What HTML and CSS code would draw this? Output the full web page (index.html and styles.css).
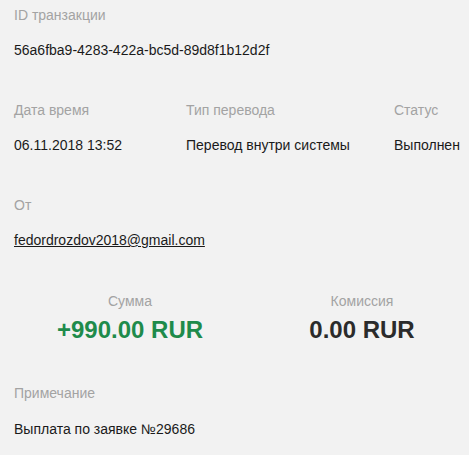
FILE: index.html
```html
<!doctype html>
<html lang="ru">

<head>
  <meta charset="utf-8">
  <title>Транзакция</title>
  <link rel="stylesheet" href="styles.css">
</head>

<body>
  <div class="details">
    <div class="field">
      <div class="label">ID транзакции</div>
      <div class="value">56a6fba9-4283-422a-bc5d-89d8f1b12d2f</div>
    </div>

    <div class="field row">
      <div class="col">
        <div class="label">Дата время</div>
        <div class="value">06.11.2018 13:52</div>
      </div>
      <div class="col">
        <div class="label">Тип перевода</div>
        <div class="value">Перевод внутри системы</div>
      </div>
      <div class="col">
        <div class="label">Статус</div>
        <div class="value">Выполнен</div>
      </div>
    </div>

    <div class="field">
      <div class="label">От</div>
      <div class="value"><a href="#" class="email">fedordrozdov2018@gmail.com</a></div>
    </div>

    <div class="field sums">
      <div class="sum">
        <div class="label">Сумма</div>
        <div class="amount plus">+990.00 RUR</div>
      </div>
      <div class="sum">
        <div class="label">Комиссия</div>
        <div class="amount">0.00 RUR</div>
      </div>
    </div>

    <div class="field">
      <div class="label">Примечание</div>
      <div class="value note">Выплата по заявке №29686</div>
    </div>
  </div>
</body>

</html>
```

FILE: styles.css
```css
html,
body {
  margin: 0;
  padding: 0;
  background-color: #f2f2f2;
  overflow: hidden;
}

body {
  font-family: "Liberation Sans", Arial, sans-serif;
  font-size: 14px;
  color: #1a1a1a;
}

.details {
  width: 464px;
  padding: 5px 0 0 14px;
}

.field {
  margin-bottom: 40px;
}

.field:last-child {
  margin-bottom: 0;
}

.label {
  color: #a3a3a3;
  line-height: 20px;
}

.value {
  line-height: 20px;
  margin-top: 15px;
}

.value.note {
  margin-top: 16px;
}

.email {
  color: #1a1a1a;
  text-decoration: underline;
}

.row {
  display: grid;
  grid-template-columns: 172px 208px auto;
}

.sums {
  display: grid;
  grid-template-columns: 1fr 1fr;
  text-align: center;
  margin-bottom: 39px;
}

.sum .label {
  margin-top: 1px;
}

.amount {
  font-size: 24px;
  font-weight: bold;
  line-height: 28px;
  margin-top: 5px;
  color: #2b2b2b;
}

.amount.plus {
  color: #1e8b4b;
}
```
